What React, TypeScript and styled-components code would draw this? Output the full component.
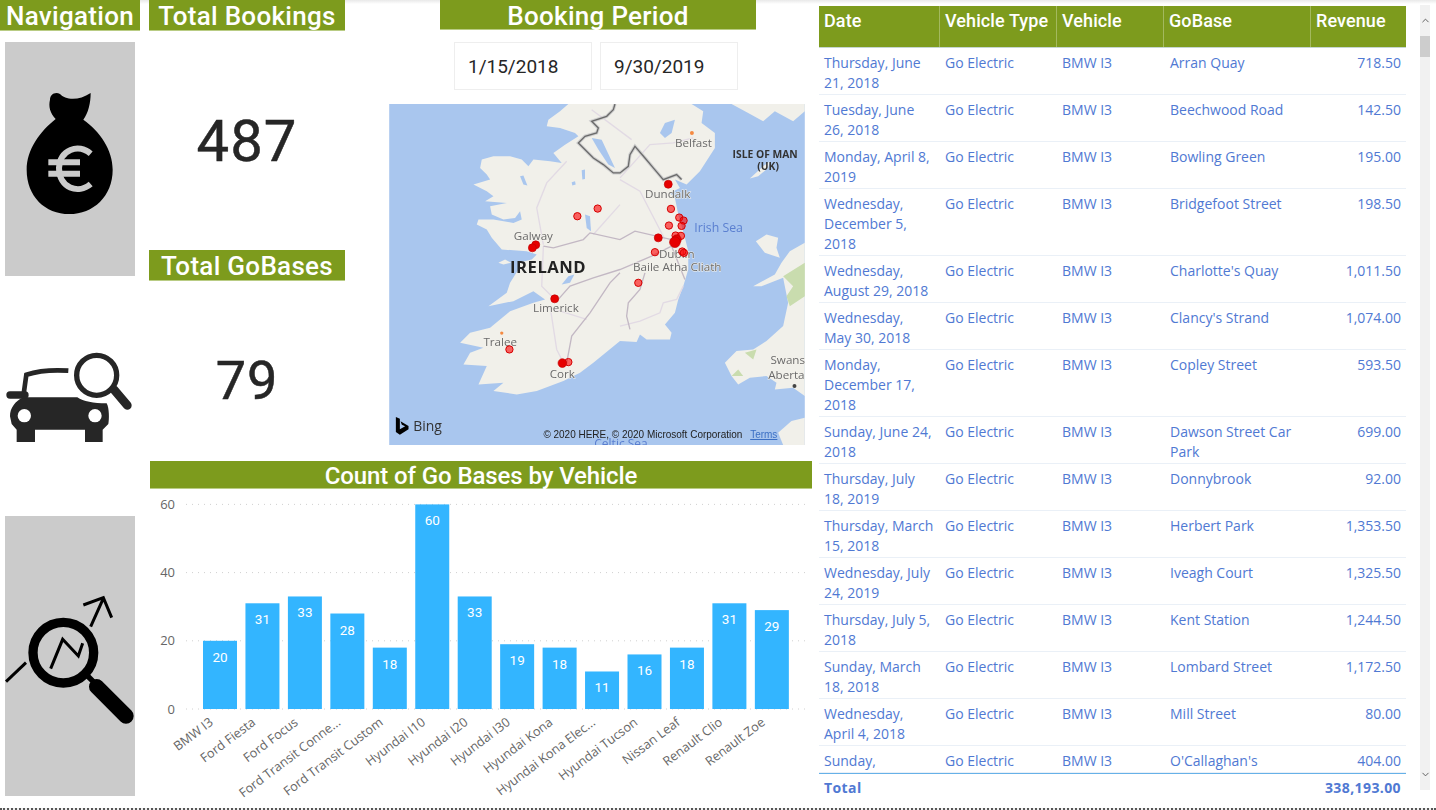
import styled, { createGlobalStyle } from "styled-components";
import { ChevronDown, ChevronUp } from "lucide-react";

const GREEN = "#7d9b1d";
const BLUE = "#5079d3";
const BAR = "#33b5ff";
const LAND = "#f1f0ea";
const WATER = "#a9c6ee";

const rows = [
  ["Thursday, June 21, 2018", "BMW I3", "Arran Quay", "718.50"],
  ["Tuesday, June 26, 2018", "BMW I3", "Beechwood Road", "142.50"],
  ["Monday, April 8, 2019", "BMW I3", "Bowling Green", "195.00"],
  ["Wednesday, December 5, 2018", "BMW I3", "Bridgefoot Street", "198.50"],
  ["Wednesday, August 29, 2018", "BMW I3", "Charlotte's Quay", "1,011.50"],
  ["Wednesday, May 30, 2018", "BMW I3", "Clancy's Strand", "1,074.00"],
  ["Monday, December 17, 2018", "BMW I3", "Copley Street", "593.50"],
  ["Sunday, June 24, 2018", "BMW I3", "Dawson Street Car Park", "699.00"],
  ["Thursday, July 18, 2019", "BMW I3", "Donnybrook", "92.00"],
  ["Thursday, March 15, 2018", "BMW I3", "Herbert Park", "1,353.50"],
  ["Wednesday, July 24, 2019", "BMW I3", "Iveagh Court", "1,325.50"],
  ["Thursday, July 5, 2018", "BMW I3", "Kent Station", "1,244.50"],
  ["Sunday, March 18, 2018", "BMW I3", "Lombard Street", "1,172.50"],
  ["Wednesday, April 4, 2018", "BMW I3", "Mill Street", "80.00"],
  ["Sunday,", "BMW I3", "O'Callaghan's", "404.00"],
];

const vehicles: [string, number][] = [
  ["BMW I3", 20],
  ["Ford Fiesta", 31],
  ["Ford Focus", 33],
  ["Ford Transit Conne...", 28],
  ["Ford Transit Custom", 18],
  ["Hyundai I10", 60],
  ["Hyundai I20", 33],
  ["Hyundai I30", 19],
  ["Hyundai Kona", 18],
  ["Hyundai Kona Elec...", 11],
  ["Hyundai Tucson", 16],
  ["Nissan Leaf", 18],
  ["Renault Clio", 31],
  ["Renault Zoe", 29],
];

// map markers, [x, y, r]
const solidPins = [
  [850, 254, 12],
  [509, 598, 12],
  [452, 436, 12],
  [442, 445, 12],
  [532, 791, 13],
  [820, 415, 12],
  [875, 420, 14],
  [870, 428, 16],
];
const softPins = [
  [858, 328, 11],
  [883, 354, 11],
  [896, 363, 11],
  [890, 379, 11],
  [852, 378, 11],
  [638, 327, 11],
  [577, 350, 11],
  [810, 458, 11],
  [892, 456, 11],
  [897, 460, 11],
  [760, 550, 11],
  [373, 750, 11],
  [550, 788, 11],
  [888, 409, 11],
  [872, 408, 11],
];

const GlobalStyle = createGlobalStyle`
  html, body {
    margin: 0;
    padding: 0;
    background: #fff;
    overflow: hidden;
  }
  * {
    box-sizing: border-box;
  }
`;

const Page = styled.div`
  width: 1436px;
  height: 810px;
  display: flex;
  overflow: hidden;
  font-family: "Open Sans", sans-serif;
  background: linear-gradient(#e9e9e9, #fff 4px);
  border-bottom: 2px dotted #555;
`;

const Heading = styled.div<{ $width: number; $height?: number }>`
  width: ${(p) => p.$width}px;
  height: ${(p) => p.$height ?? 31}px;
  flex: none;
  background: ${GREEN};
  border-bottom: 1px solid #b9cc84;
  color: #fff;
  font: 500 26px/32px Roboto, sans-serif;
  letter-spacing: 0.3px;
  text-align: center;
  white-space: nowrap;
`;

const PeriodHeading = styled(Heading)`
  margin-left: 2px;
`;

const ChartHeading = styled(Heading)`
  font-size: 24px;
  line-height: 30px;
  letter-spacing: -0.1px;
`;

const NavColumn = styled.nav`
  width: 149px;
  flex: none;
  display: flex;
  flex-direction: column;
`;

const NavTile = styled.div<{ $height: number; $top: number; $grey?: boolean }>`
  width: 130px;
  height: ${(p) => p.$height}px;
  margin: ${(p) => p.$top}px 0 0 5px;
  background: ${(p) => (p.$grey ? "#cbcbcb" : "transparent")};

  svg {
    display: block;
  }
`;

const Main = styled.main`
  width: 663px;
  flex: none;
  display: flex;
  flex-direction: column;
`;

const TopRow = styled.div`
  height: 461px;
  flex: none;
  display: flex;
`;

const KpiColumn = styled.section`
  width: 196px;
  flex: none;
  display: flex;
  flex-direction: column;
`;

const KpiValue = styled.div<{ $height: number; $size: number; $shift: number }>`
  height: ${(p) => p.$height}px;
  flex: none;
  padding-top: ${(p) => p.$shift}px;
  display: flex;
  align-items: center;
  justify-content: center;
  color: #262626;
  font: 400 ${(p) => p.$size}px Roboto, sans-serif;
  letter-spacing: 1px;
  -webkit-text-stroke: 0.5px #262626;
`;

const PeriodColumn = styled.section`
  width: 416px;
  margin-left: 44px;
  flex: none;
  display: flex;
  flex-direction: column;
  align-items: center;
`;

const DateRow = styled.div`
  display: flex;
  gap: 8px;
  margin: 12px 0 14px -2px;
`;

const DateBox = styled.div`
  width: 138px;
  height: 48px;
  padding-left: 13px;
  border: 1px solid #eeeeee;
  color: #262626;
  font: 400 19px/48px Roboto, sans-serif;
`;

const MapFrame = styled.div`
  width: 416px;
  height: 341px;

  svg {
    display: block;
    filter: blur(0.3px);
  }
`;

const ChartPanel = styled.section`
  padding-left: 1px;
  display: flex;
  flex-direction: column;

  svg {
    display: block;
  }
`;

const TableArea = styled.section`
  width: 587px;
  margin: 6px 0 0 7px;
  flex: none;
  display: flex;
  flex-direction: column;
`;

const COLS = "120px 117px 107px 147px 96px";

const HeaderRow = styled.div`
  height: 42px;
  flex: none;
  display: grid;
  grid-template-columns: ${COLS};
  background: ${GREEN};
  border-bottom: 1px solid #c5d6d0;
`;

const HeaderCell = styled.div`
  padding: 3px 5px 0;
  border-left: 1px solid #a3b95e;
  color: #fff;
  font: 500 18px/24px Roboto, sans-serif;
  letter-spacing: 0.1px;
  white-space: nowrap;

  &:first-child {
    border-left: 0;
  }
`;

const TableBody = styled.div`
  height: 725px;
  flex: none;
  overflow: hidden;
`;

const Row = styled.div`
  display: grid;
  grid-template-columns: ${COLS};
  padding: 5px 0 1px;
  border-bottom: 1px solid #eaf0f7;
`;

const Cell = styled.div<{ $right?: boolean }>`
  padding: 0 5px 0 6px;
  color: ${BLUE};
  font-size: 14px;
  line-height: 20px;
  text-align: ${(p) => (p.$right ? "right" : "left")};

  &:first-child {
    padding-left: 5px;
  }
  &:nth-child(4) {
    padding-left: 7px;
  }
`;

const TotalRow = styled.div`
  height: 27px;
  flex: none;
  display: flex;
  align-items: center;
  justify-content: space-between;
  padding: 0 5px;
  border-top: 1px solid #66b1e8;
  color: ${BLUE};
  font-size: 14px;
  font-weight: 700;
  letter-spacing: 0.4px;
`;

const Scrollbar = styled.div`
  width: 10px;
  height: 785px;
  margin: 5px 0 0 14px;
  flex: none;
  display: flex;
  flex-direction: column;
  align-items: center;
  justify-content: space-between;
  background: #f1f1f1;
  color: #555;
`;

const ScrollTop = styled.div`
  display: flex;
  flex-direction: column;
  align-items: center;
`;

const ScrollButton = styled.div`
  height: 31px;
  display: flex;
  align-items: center;
`;

const ScrollThumb = styled.div`
  width: 10px;
  height: 21px;
  background: #cdcdcd;
`;

function BagIcon() {
  return (
    <svg width="130" height="234" viewBox="15 128 390 700">
      <path d="M150 300C150 285 165 275 180 283C195 300 235 305 272 280C272 310 265 340 250 360C300 395 338 450 338 510C338 590 280 643 208 643C135 643 80 590 80 510C80 450 120 395 167 358C150 340 145 320 150 300Z" />
      <g fill="none" stroke="#cbcbcb" strokeWidth="18">
        <path d="M272 462C235 430 180 450 177 505C177 565 235 585 272 553" />
        <path d="M145 488H240M145 522H240" />
      </g>
    </svg>
  );
}

function CarIcon() {
  return (
    <svg width="130" height="100" viewBox="15 140 390 300">
      <path
        d="M30 345C30 320 45 300 70 288H232C250 300 280 306 320 306C328 320 328 355 325 368L308 385V422H255V385H105V422H50V385L35 368Z"
        fill="#262626"
      />
      <circle cx="73" cy="343" r="20" fill="#fff" />
      <circle cx="285" cy="343" r="20" fill="#fff" />
      <g fill="none" stroke="#262626" strokeLinecap="round">
        <path d="M30 281H75" strokeWidth="22" />
        <path d="M70 285L79 220C110 210 160 205 205 208" strokeWidth="14" strokeLinecap="butt" />
        <circle cx="290" cy="222" r="60" strokeWidth="16" />
        <path d="M342 265L382 312" strokeWidth="26" />
      </g>
    </svg>
  );
}

function TrendIcon() {
  return (
    <svg width="130" height="280" viewBox="15 648 390 840">
      <g fill="none" stroke="#000" strokeLinecap="round">
        <circle cx="190" cy="1058" r="91" strokeWidth="28" />
        <path d="M290 1160L378 1248" strokeWidth="46" />
        <path d="M260 1125L285 1150" strokeWidth="16" />
        <path d="M152 1106L188 1018L235 1068L248 1030" strokeWidth="9" strokeLinecap="butt" />
        <path d="M272 980L310 895M250 915L310 893L335 953" strokeWidth="9" strokeLinecap="butt" />
        <path d="M18 1145L78 1088" strokeWidth="9" strokeLinecap="butt" />
      </g>
    </svg>
  );
}

const mapText = {
  fontFamily: "'Open Sans', sans-serif",
  paintOrder: "stroke",
  stroke: "#f4f2ec",
  strokeWidth: 3,
} as const;

const BORDER_LINE =
  "M690 13L685 30L665 50L620 65L640 85L635 100L600 110L580 130L625 175L655 195L685 220L705 220L730 200L735 165L750 140L780 175L805 205L835 240L875 225L890 240";

function IrelandMap() {
  return (
    <svg width="416" height="341" viewBox="12 13 1248 1024">
      <rect x="12" y="13" width="1248" height="1024" fill={WATER} />

      {/* Britain and the islands */}
      <g fill={LAND}>
        <path d="M1040 13L1090 40L1135 65L1170 35L1225 65L1260 35V13Z" />
        <path d="M1095 237L1135 200L1155 185L1150 205L1120 230Z" />
        <path d="M1113 425L1145 405L1180 415L1175 445L1185 475L1140 460Z" />
        <path d="M1260 430L1215 455L1190 490L1170 525L1105 560L1130 560L1195 535L1200 560L1210 610L1195 680L1145 725L1105 750L1055 755L1020 790L1040 830L1060 855L1095 835L1145 830L1175 850L1170 870L1225 865L1260 890Z" />
        <path d="M1180 1000L1220 965L1260 955V1037H1195Z" />
      </g>
      <g fill="#c9dcae">
        <path d="M1195 530L1260 490V590L1215 620L1205 590L1225 560Z" />
        <path d="M1080 760L1115 750L1105 780Z" />
        <path d="M1040 830L1060 810L1075 830Z" />
      </g>

      {/* Ireland */}
      <path
        d="M550 13L525 35L490 60L485 80L525 85L570 100L580 110L540 135L505 160L530 190L495 185L445 180L430 200L410 180L375 170L325 170L290 180L285 205L305 225L315 240L265 255L305 275L325 290L300 305L365 310L315 320L320 345L355 360L390 355L405 335L410 360L385 370L325 360L280 360L275 375L305 390L320 415L350 450L425 455L455 465L440 480L400 490L400 510L375 550L365 580L310 620L385 605L445 575L480 600L445 610L375 635L315 685L255 700L225 730L295 745L255 760L235 795L305 800L280 855L355 850L325 875L395 885L455 875L535 845L585 820L625 790L705 725L755 728L765 705L785 720L855 720L860 700L840 675L870 640L880 600L895 560L910 510L910 455L900 415L880 345L870 295L855 280L885 265L870 240L905 255L945 215L990 145L990 100L950 70L955 35L920 13Z"
        fill={LAND}
      />
      <path d="M340 490L360 480L378 490L355 495Z" fill={LAND} />

      {/* Loughs */}
      <g fill={WATER}>
        <path d="M825 100L840 70L870 60L860 100L840 115Z" />
        <path d="M620 115L650 120L690 205L670 195L640 150Z" />
        <path d="M405 230L415 228L427 258L415 255Z" />
        <path d="M590 212L600 210L600 238L592 240Z" />
        <path d="M560 248L570 245L572 255L562 258Z" />
        <path d="M600 345L615 350L618 395L605 385Z" />
        <path d="M530 555L550 530L568 525L555 550Z" />
      </g>

      {/* Roads */}
      <g fill="none" stroke="#e2dae4" strokeWidth="4">
        <path d="M545 185L485 250L455 325L475 435" />
        <path d="M705 240L765 275L840 420" />
        <path d="M705 315L625 405" />
        <path d="M705 235L795 135L865 130L925 115" />
        <path d="M495 620L515 750L535 790" />
        <path d="M605 660L495 625" />
        <path d="M895 560L875 600L835 610L825 640L765 665L705 680" />
        <path d="M475 440L470 560L510 600" />
        <path d="M620 30L740 120" />
      </g>
      <g fill="none" stroke="#c3b8c4" strokeWidth="4">
        <path d="M475 440L505 445L595 420L615 400L705 420L750 395L860 420" />
        <path d="M515 605L555 560L625 535L705 510L800 470L860 440" />
        <path d="M545 790L560 710L615 640L675 550L705 520" />
        <path d="M780 520L765 570L730 610L725 650L735 690" />
        <path d="M860 440L900 540" />
      </g>

      {/* Border */}
      <path d={BORDER_LINE} fill="none" stroke="#cfcfcf" strokeWidth="10" />
      <path d={BORDER_LINE} fill="none" stroke="#6b6b6b" strokeWidth="4" />

      {/* Labels */}
      <g fill="#6a6a6a" fontSize="35" style={mapText}>
        <text x="870" y="142">Belfast</text>
        <text x="780" y="296">Dundalk</text>
        <text x="386" y="420">Galway</text>
        <text x="822" y="474">Dublin</text>
        <text x="744" y="515">Baile Atha Cliath</text>
        <text x="444" y="639">Limerick</text>
        <text x="295" y="741">Tralee</text>
        <text x="494" y="835">Cork</text>
        <text x="1157" y="795">Swans</text>
        <text x="1150" y="838">Aberta</text>
      </g>
      <text x="375" y="521" fontSize="50" fontWeight="700" fill="#222" fontFamily="'Open Sans', sans-serif" letterSpacing="1.5">
        IRELAND
      </text>
      <g fontSize="31" fontWeight="700" fill="#333" fontFamily="'Open Sans', sans-serif" textAnchor="middle">
        <text x="1141" y="176">ISLE OF MAN</text>
        <text x="1150" y="212">(UK)</text>
      </g>
      <text x="928" y="398" fontSize="37" fill="#5a7fd0" fontFamily="'Open Sans', sans-serif">Irish Sea</text>
      <text x="628" y="1046" fontSize="36" fill="#5a7fd0" fontFamily="'Open Sans', sans-serif">Celtic Sea</text>

      <circle cx="921" cy="100" r="6" fill="#f58a42" />
      <circle cx="350" cy="701" r="5" fill="#f58a42" />
      <circle cx="1229" cy="860" r="6" fill="#444" />

      {softPins.map(([x, y, r]) => (
        <circle key={`${x}-${y}`} cx={x} cy={y} r={r} fill="#ff0000" fillOpacity="0.6" stroke="#d40000" strokeWidth="3" />
      ))}
      {solidPins.map(([x, y, r]) => (
        <circle key={`${x}-${y}`} cx={x} cy={y} r={r} fill="#e60000" stroke="#c00000" strokeWidth="2" />
      ))}

      {/* Bing */}
      <path d="M32 953L44 958V990L60 981L50 976L46 966L70 980V990L44 1006L32 998Z" fill="#000" />
      <text x="84" y="996" fontSize="42" fill="#333" fontFamily="'Open Sans', sans-serif">Bing</text>

      <text x="475" y="1016" fontSize="30" fill="#222" fontFamily="'Liberation Sans', sans-serif">
        © 2020 HERE, © 2020 Microsoft Corporation
      </text>
      <text x="1096" y="1016" fontSize="30" fill="#3b6fc4" textDecoration="underline" fontFamily="'Liberation Sans', sans-serif">
        Terms
      </text>
    </svg>
  );
}

function BarChart() {
  const zero = 709;
  const unit = 3.41;
  return (
    <svg width="662" height="316" viewBox="150 489 662 316">
      {[0, 20, 40, 60].map((v) => (
        <g key={v}>
          <line
            x1="186"
            x2="806"
            y1={zero - v * unit}
            y2={zero - v * unit}
            stroke="#d0d0d0"
            strokeDasharray="1 5"
          />
          <text
            x="175"
            y={zero - v * unit + 4.5}
            textAnchor="end"
            fontSize="13"
            fill="#666"
            fontFamily="'Open Sans', sans-serif"
          >
            {v}
          </text>
        </g>
      ))}
      {vehicles.map(([name, value], i) => {
        const x = 203 + i * 42.45;
        const top = zero - value * unit;
        return (
          <g key={name}>
            <rect x={x} y={top} width="34" height={value * unit} fill={BAR} />
            <text
              x={x + 17}
              y={top + 21}
              textAnchor="middle"
              fontSize="13.5"
              fill="#fff"
              fontFamily="Roboto, sans-serif"
            >
              {value}
            </text>
            <text
              transform={`translate(${x + 11} 724) rotate(-37)`}
              textAnchor="end"
              fontSize="12.7"
              fill="#666"
              fontFamily="'Open Sans', sans-serif"
            >
              {name}
            </text>
          </g>
        );
      })}
    </svg>
  );
}

export default function App() {
  return (
    <>
      <GlobalStyle />
      <Page>
        <NavColumn>
          <Heading $width={140}>Navigation</Heading>
          <NavTile $grey $height={234} $top={11}>
            <BagIcon />
          </NavTile>
          <NavTile $height={100} $top={72}>
            <CarIcon />
          </NavTile>
          <NavTile $grey $height={280} $top={68}>
            <TrendIcon />
          </NavTile>
        </NavColumn>

        <Main>
          <TopRow>
            <KpiColumn>
              <Heading $width={196}>Total Bookings</Heading>
              <KpiValue $height={219} $size={58} $shift={0}>
                487
              </KpiValue>
              <Heading $width={196}>Total GoBases</Heading>
              <KpiValue $height={180} $size={54} $shift={18}>
                79
              </KpiValue>
            </KpiColumn>
            <PeriodColumn>
              <PeriodHeading $width={316} $height={30}>Booking Period</PeriodHeading>
              <DateRow>
                <DateBox>1/15/2018</DateBox>
                <DateBox>9/30/2019</DateBox>
              </DateRow>
              <MapFrame>
                <IrelandMap />
              </MapFrame>
            </PeriodColumn>
          </TopRow>
          <ChartPanel>
            <ChartHeading $width={662} $height={28}>Count of Go Bases by Vehicle</ChartHeading>
            <BarChart />
          </ChartPanel>
        </Main>

        <TableArea>
          <HeaderRow>
            {["Date", "Vehicle Type", "Vehicle", "GoBase", "Revenue"].map((h) => (
              <HeaderCell key={h}>{h}</HeaderCell>
            ))}
          </HeaderRow>
          <TableBody>
            {rows.map(([date, vehicle, base, revenue]) => (
              <Row key={base}>
                <Cell>{date}</Cell>
                <Cell>Go Electric</Cell>
                <Cell>{vehicle}</Cell>
                <Cell>{base}</Cell>
                <Cell $right>{revenue}</Cell>
              </Row>
            ))}
          </TableBody>
          <TotalRow>
            <span>Total</span>
            <span>338,193.00</span>
          </TotalRow>
        </TableArea>

        <Scrollbar>
          <ScrollTop>
            <ScrollButton>
              <ChevronUp size={11} />
            </ScrollButton>
            <ScrollThumb />
          </ScrollTop>
          <ScrollButton>
            <ChevronDown size={11} />
          </ScrollButton>
        </Scrollbar>
      </Page>
    </>
  );
}
